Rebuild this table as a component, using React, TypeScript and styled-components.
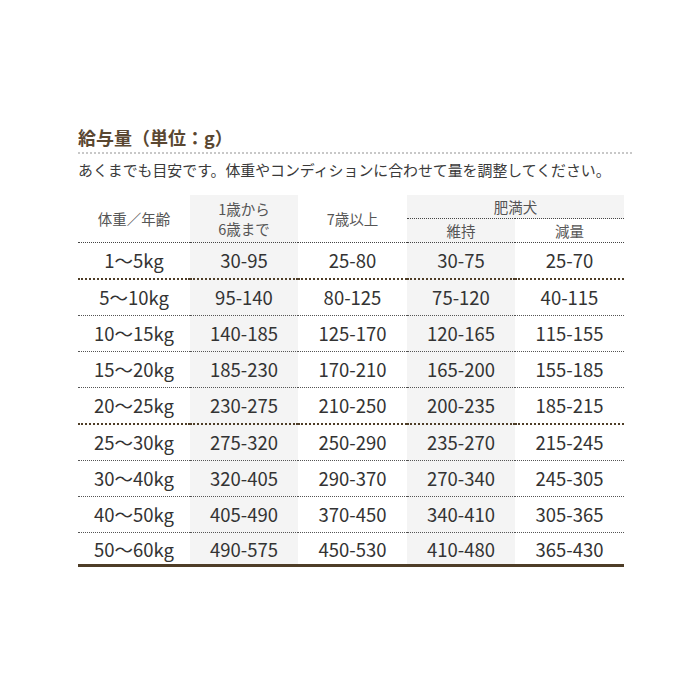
import React from "react";
import styled, { createGlobalStyle } from "styled-components";

const Global = createGlobalStyle`
  html, body { margin: 0; padding: 0; background: #fff; }
  body { font-family: "Noto Sans CJK JP", "Noto Sans", sans-serif; color: #333; }
`;

const Page = styled.div`
  width: 700px;
  height: 700px;
  box-sizing: border-box;
  padding: 124px 68px 0 78px;
`;

const Title = styled.h2`
  margin: 0;
  font-size: 18px;
  line-height: 26px;
  font-weight: 700;
  color: #5a4731;
  padding-bottom: 2px;
  border-bottom: 2px dotted #c8c8c8;
`;

const Note = styled.p`
  margin: 5px 0 0;
  font-size: 14.9px;
  line-height: 22px;
  color: #3a3a3a;
  white-space: nowrap;
`;

const Table = styled.table`
  margin-top: 14px;
  border-collapse: collapse;
  table-layout: fixed;
  width: 546px;
`;

const Th = styled.th<{ $grey?: boolean; $line?: boolean }>`
  font-weight: 400;
  font-size: 14.5px;
  line-height: 20px;
  color: #555;
  text-align: center;
  vertical-align: middle;
  padding: 0;
  height: 23px;
  background: ${(p) => (p.$grey ? "#f4f4f4" : "#fff")};
  border-bottom: 1px dotted ${(p) => (p.$line ? "#444" : "transparent")};
`;

const Td = styled.td<{ $grey?: boolean; $bottom: "thin" | "thick" | "solid" }>`
  font-size: 18.5px;
  color: #333;
  text-align: center;
  vertical-align: middle;
  padding: ${(p) => (p.$bottom === "solid" ? "0" : "0 0 1px")};
  height: ${(p) => (p.$bottom === "solid" ? "31px" : "34px")};
  background: ${(p) => (p.$grey ? "#f4f4f4" : "#fff")};
  border-bottom: ${(p) =>
    p.$bottom === "solid"
      ? "3px solid #4e3d27"
      : p.$bottom === "thick"
      ? "2px dotted #4e3d27"
      : "1px dotted #555"};
`;

const rows: [string, string, string, string, string][] = [
  ["1～5kg", "30-95", "25-80", "30-75", "25-70"],
  ["5～10kg", "95-140", "80-125", "75-120", "40-115"],
  ["10～15kg", "140-185", "125-170", "120-165", "115-155"],
  ["15～20kg", "185-230", "170-210", "165-200", "155-185"],
  ["20～25kg", "230-275", "210-250", "200-235", "185-215"],
  ["25～30kg", "275-320", "250-290", "235-270", "215-245"],
  ["30～40kg", "320-405", "290-370", "270-340", "245-305"],
  ["40～50kg", "405-490", "370-450", "340-410", "305-365"],
  ["50～60kg", "490-575", "450-530", "410-480", "365-430"],
];

const bottomFor = (i: number): "thin" | "thick" | "solid" =>
  i === rows.length - 1 ? "solid" : i === 0 || i === 4 ? "thick" : "thin";

export default function App() {
  return (
    <>
      <Global />
      <Page>
        <Title>給与量（単位：g）</Title>
        <Note>あくまでも目安です。体重やコンディションに合わせて量を調整してください。</Note>
        <Table>
          <colgroup>
            <col style={{ width: 112 }} />
            <col style={{ width: 108 }} />
            <col style={{ width: 109 }} />
            <col style={{ width: 108 }} />
            <col style={{ width: 109 }} />
          </colgroup>
          <thead>
            <tr>
              <Th rowSpan={2} $line>体重／年齢</Th>
              <Th rowSpan={2} $grey $line>1歳から<br />6歳まで</Th>
              <Th rowSpan={2} $line>7歳以上</Th>
              <Th colSpan={2} $grey $line>肥満犬</Th>
            </tr>
            <tr>
              <Th $grey $line>維持</Th>
              <Th $line>減量</Th>
            </tr>
          </thead>
          <tbody>
            {rows.map((r, i) => (
              <tr key={r[0]}>
                {r.map((c, j) => (
                  <Td key={j} $grey={j === 1 || j === 3} $bottom={bottomFor(i)}>
                    {c}
                  </Td>
                ))}
              </tr>
            ))}
          </tbody>
        </Table>
      </Page>
    </>
  );
}
